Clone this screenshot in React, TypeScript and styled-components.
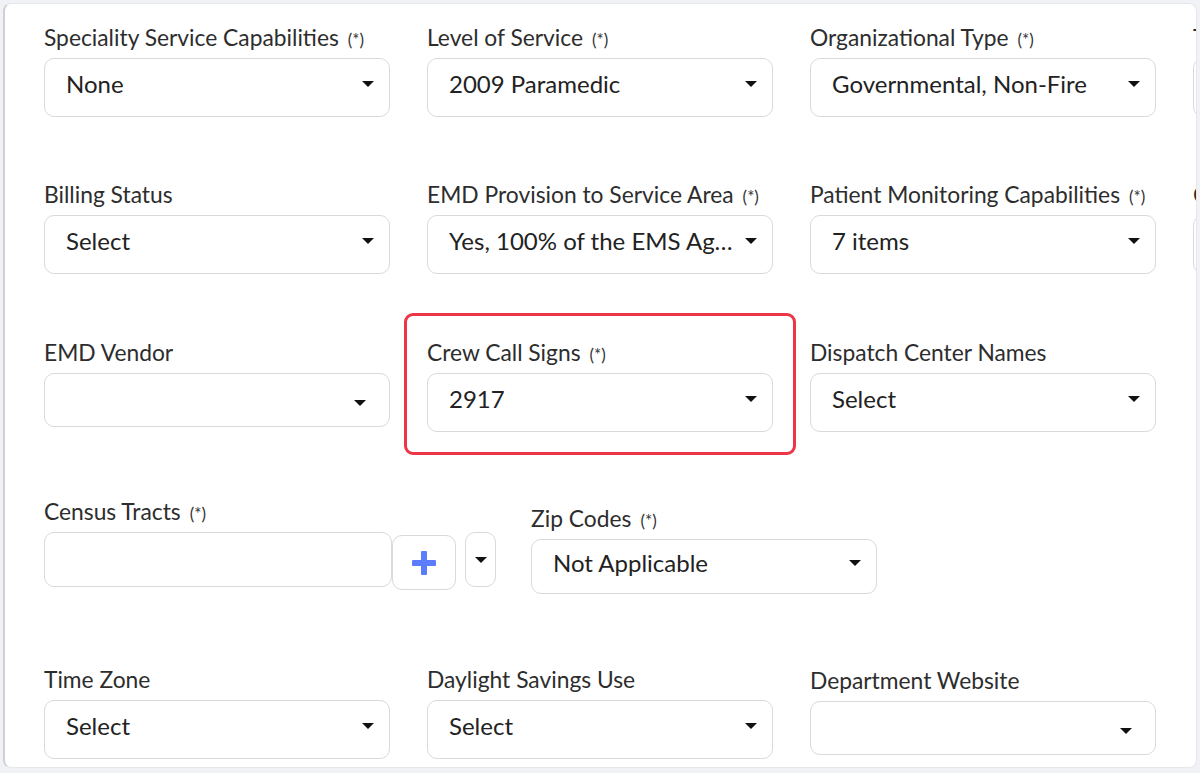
import React from "react";
import styled, { createGlobalStyle } from "styled-components";

const Global = createGlobalStyle`
  html, body { margin: 0; padding: 0; background: #f1f2f6; }
  body { font-family: Lato, "Open Sans", Arial, sans-serif; color: #2b2b2b; }
`;

const Panel = styled.div`
  margin: 3px 3px 3px 3px;
  height: 765px;
  background: #fff;
  border: 1px solid #e6e7eb;
  border-left: 2px solid #cfd0d4;
  border-radius: 8px;
  overflow: hidden;
  box-sizing: border-box;
  padding-left: 39px;
  position: relative;
`;

const Row = styled.div<{ $top: number }>`
  display: flex;
  gap: 37px;
  margin-top: ${(p) => p.$top}px;
  align-items: flex-start;
  width: 1600px;
`;

const Field = styled.div<{ $w?: number; $highlight?: boolean; $offset?: number; $ml?: number }>`
  width: ${(p) => p.$w || 346}px;
  flex: none;
  position: relative;
  margin-top: ${(p) => p.$offset || 0}px;
  margin-left: ${(p) => p.$ml || 0}px;
  ${(p) =>
    p.$highlight &&
    `&::after {
      content: "";
      position: absolute;
      left: -23px; right: -23px; top: -27px; bottom: -23px;
      border: 3px solid #ec3546;
      border-radius: 9px;
      pointer-events: none;
    }`}
`;

const Label = styled.div`
  font-size: 22.8px;
  line-height: 24px;
  height: 24px;
  margin-bottom: 9px;
  color: #2d2d2d;
  white-space: nowrap;
`;

const Req = styled.span`
  font-size: 17px;
  margin-left: 9px;
  color: #333;
`;

const Select = styled.div<{ $h?: number; $empty?: boolean; $mt?: number }>`
  box-sizing: border-box;
  height: ${(p) => p.$h || 59}px;
  margin-top: ${(p) => p.$mt || 0}px;
  border: 1px solid #d9d9dc;
  border-radius: 10px;
  display: flex;
  align-items: center;
  padding: 0 ${(p) => (p.$empty ? 23 : 15)}px ${(p) => (p.$empty ? 0 : 8)}px 21px;
  font-size: 24px;
  color: #222;
  background: #fff;
`;

const Value = styled.span`
  flex: 1;
  white-space: nowrap;
  overflow: hidden;
  text-overflow: ellipsis;
  padding-right: 12px;
`;

const Caret = styled.span<{ $down?: number }>`
  width: 0;
  height: 0;
  border-left: 6px solid transparent;
  border-right: 6px solid transparent;
  border-top: 6px solid #111;
  margin-top: ${(p) => p.$down || 0}px;
  flex: none;
`;

const InputGroup = styled.div`
  display: flex;
  align-items: flex-start;
  margin-top: 2px;
`;

const TextInput = styled.div`
  box-sizing: border-box;
  width: 348px;
  height: 55px;
  border: 1px solid #d9d9dc;
  border-radius: 10px;
  flex: none;
`;

const PlusButton = styled.div`
  box-sizing: border-box;
  width: 64px;
  height: 55px;
  margin-top: 3px;
  border: 1px solid #d9d9dc;
  border-radius: 10px;
  display: flex;
  align-items: center;
  justify-content: center;
  flex: none;
`;

const SmallDrop = styled.div`
  box-sizing: border-box;
  width: 31px;
  height: 55px;
  margin-left: 9px;
  border: 1px solid #d9d9dc;
  border-radius: 10px;
  display: flex;
  align-items: center;
  justify-content: center;
  flex: none;
`;

const Plus = () => (
  <svg width="26" height="26" viewBox="0 0 26 26">
    <rect x="10" y="1" width="6" height="24" rx="1" fill="#5b7cfb" />
    <rect x="1" y="10" width="24" height="6" rx="1" fill="#5b7cfb" />
  </svg>
);

type F = { label: string; req?: boolean; value?: string };

const SelectField = ({ label, req, value, highlight, h, mt }: F & { highlight?: boolean; h?: number; mt?: number }) => (
  <Field $highlight={highlight}>
    <Label>
      {label}
      {req && <Req>(*)</Req>}
    </Label>
    <Select $empty={!value} $h={h} $mt={mt}>
      <Value>{value}</Value>
      <Caret $down={value ? 0 : 5} />
    </Select>
  </Field>
);

export default function App() {
  return (
    <>
      <Global />
      <Panel>
        <Row $top={21}>
          <SelectField label="Speciality Service Capabilities" req value="None" />
          <SelectField label="Level of Service" req value="2009 Paramedic" />
          <SelectField label="Organizational Type" req value="Governmental, Non-Fire" />
          <SelectField label="Type of Service" req value="Select" />
        </Row>
        <Row $top={65}>
          <SelectField label="Billing Status" value="Select" />
          <SelectField label="EMD Provision to Service Area" req value="Yes, 100% of the EMS Agency's Service Area" />
          <SelectField label="Patient Monitoring Capabilities" req value="7 items" />
          <SelectField label="Crew Types" req value="Select" />
        </Row>
        <Row $top={66}>
          <SelectField label="EMD Vendor" h={54} mt={1} />
          <SelectField label="Crew Call Signs" req value="2917" highlight />
          <SelectField label="Dispatch Center Names" value="Select" />
        </Row>
        <Row $top={67}>
          <Field $w={452}>
            <Label>
              Census Tracts<Req>(*)</Req>
            </Label>
            <InputGroup>
              <TextInput />
              <PlusButton>
                <Plus />
              </PlusButton>
              <SmallDrop>
                <Caret />
              </SmallDrop>
            </InputGroup>
          </Field>
          <Field $offset={7} $ml={-2}>
            <Label>
              Zip Codes<Req>(*)</Req>
            </Label>
            <Select $h={55} $mt={2}>
              <Value>Not Applicable</Value>
              <Caret />
            </Select>
          </Field>
        </Row>
        <Row $top={73}>
          <SelectField label="Time Zone" value="Select" />
          <SelectField label="Daylight Savings Use" value="Select" />
          <Field $offset={1}>
            <Label>Department Website</Label>
            <Select $empty $h={54} $mt={2}>
              <Value />
              <Caret $down={5} />
            </Select>
          </Field>
        </Row>
      </Panel>
    </>
  );
}
